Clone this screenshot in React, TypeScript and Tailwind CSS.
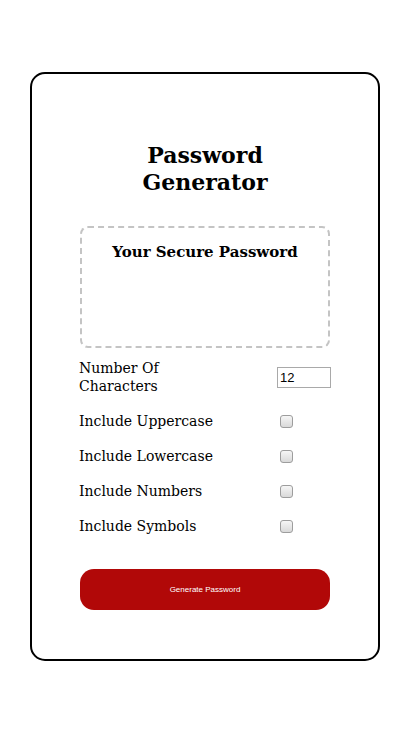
import { useState } from 'react'

const options = ['Include Uppercase', 'Include Lowercase', 'Include Numbers', 'Include Symbols']

function Checkbox({ checked, onChange }: { checked: boolean; onChange: () => void }) {
  return (
    <input
      type="checkbox"
      checked={checked}
      onChange={onChange}
      className="ml-[3px] h-[13px] w-[13px] appearance-none rounded-[3px] border border-[#9d9d9d] bg-gradient-to-b from-[#f6f6f6] to-[#d9d9d9] checked:bg-[#4a7bd0]"
    />
  )
}

export default function App() {
  const [length, setLength] = useState('12')
  const [checks, setChecks] = useState<boolean[]>([false, false, false, false])

  const toggle = (i: number) => {
    setChecks((prev) => prev.map((c, j) => (j === i ? !c : c)))
  }

  return (
    <div className="min-h-[732px] w-[410px] bg-white pl-[30px] pt-[72px] font-['DejaVu_Serif',Georgia,serif] text-black">
      <div className="flex w-[350px] flex-col rounded-[15px] border-2 border-black px-[47px] pb-[49px] pt-[68px]">
        <h1 className="text-center text-[22px] font-bold leading-[27px]">
          Password
          <br />
          Generator
        </h1>

        {/* output box */}
        <div className="mx-[1px] mt-[30px] h-[122px] rounded-[8px] border-2 border-dashed border-[#c4c4c4] pt-[13px]">
          <h2 className="text-center text-[15px] font-bold leading-[22px]">Your Secure Password</h2>
        </div>

        <div className="mt-[11px] flex flex-col gap-[17px]">
          <div className="flex items-center">
            <label className="w-[198px] pr-[80px] text-[14px] leading-[18px]">Number Of Characters</label>
            <input
              type="text"
              value={length}
              onChange={(e) => setLength(e.target.value)}
              className="h-[21px] w-[54px] border border-[#a9a9a9] px-[2px] font-['Liberation_Sans',Arial,sans-serif] text-[13px] outline-none"
            />
          </div>
          {options.map((label, i) => (
            <div key={label} className="flex items-center">
              <label className="w-[198px] text-[14px] leading-[18px]">{label}</label>
              <Checkbox checked={checks[i]} onChange={() => toggle(i)} />
            </div>
          ))}
        </div>

        <button className="mt-[34px] h-[41px] w-[250px] self-center rounded-[14px] bg-[#b10808] font-['Liberation_Sans',Arial,sans-serif] text-[8px] text-white">
          Generate Password
        </button>
      </div>
    </div>
  )
}
